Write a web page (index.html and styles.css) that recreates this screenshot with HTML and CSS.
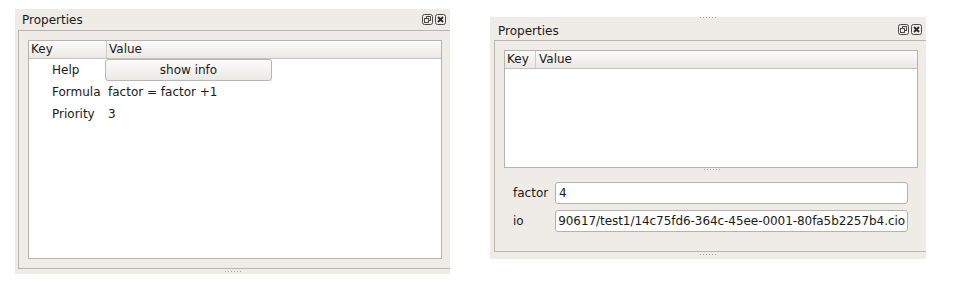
FILE: index.html
```html
<!DOCTYPE html>
<html>
<head>
  <meta charset="utf-8">
  <link rel="stylesheet" href="styles.css">
</head>
<body>
  <div class="dock dock-left">
    <div class="dock-title">
      <span>Properties</span>
      <div class="dock-buttons">
        <svg width="11" height="11" viewBox="0 0 11 11"><rect x="0.5" y="0.5" width="10" height="10" rx="2" fill="none" stroke="#4a4a4a"/><rect x="4.5" y="2.5" width="4" height="4" fill="none" stroke="#4a4a4a"/><rect x="2.5" y="4.5" width="4" height="4" fill="#efebe7" stroke="#4a4a4a"/></svg>
        <svg width="11" height="11" viewBox="0 0 11 11"><rect x="0.5" y="0.5" width="10" height="10" rx="2" fill="none" stroke="#4a4a4a"/><path d="M3 3L8 8M8 3L3 8" stroke="#2a2a2a" stroke-width="1.8"/></svg>
      </div>
    </div>
    <div class="dock-frame">
      <div class="tree tree-left">
        <div class="tree-head">
          <div class="col-key">Key</div>
          <div class="col-val">Value</div>
        </div>
        <div class="tree-row">
          <div class="col-key">Help</div>
          <div class="col-val"><button class="info-btn">show info</button></div>
        </div>
        <div class="tree-row">
          <div class="col-key">Formula</div>
          <div class="col-val">factor = factor +1</div>
        </div>
        <div class="tree-row">
          <div class="col-key">Priority</div>
          <div class="col-val">3</div>
        </div>
      </div>
    </div>
    <div class="grip grip-bottom"></div>
  </div>

  <div class="dock dock-right">
    <div class="grip grip-top"></div>
    <div class="dock-title">
      <span>Properties</span>
      <div class="dock-buttons">
        <svg width="11" height="11" viewBox="0 0 11 11"><rect x="0.5" y="0.5" width="10" height="10" rx="2" fill="none" stroke="#4a4a4a"/><rect x="4.5" y="2.5" width="4" height="4" fill="none" stroke="#4a4a4a"/><rect x="2.5" y="4.5" width="4" height="4" fill="#efebe7" stroke="#4a4a4a"/></svg>
        <svg width="11" height="11" viewBox="0 0 11 11"><rect x="0.5" y="0.5" width="10" height="10" rx="2" fill="none" stroke="#4a4a4a"/><path d="M3 3L8 8M8 3L3 8" stroke="#2a2a2a" stroke-width="1.8"/></svg>
      </div>
    </div>
    <div class="dock-frame frame-right">
      <div class="tree tree-right">
        <div class="tree-head">
          <div class="col-key">Key</div>
          <div class="col-val">Value</div>
        </div>
      </div>
      <div class="splitter"><div class="grip"></div></div>
      <div class="form">
        <div class="form-row">
          <label>factor</label>
          <div class="field">4</div>
        </div>
        <div class="form-row">
          <label>io</label>
          <div class="field field-end"><span>90617/test1/14c75fd6-364c-45ee-0001-80fa5b2257b4.cio</span></div>
        </div>
      </div>
    </div>
    <div class="grip grip-bottom"></div>
  </div>
</body>
</html>
```

FILE: styles.css
```css
body { margin: 0; background: #fff; font-family: "DejaVu Sans", sans-serif; font-size: 12px; color: #1a1a1a; display: flex; align-items: flex-start; padding-left: 15px; gap: 40px; }

.dock { background: #efebe7; overflow: hidden; display: flex; flex-direction: column; }
.dock-left { width: 435px; height: 265px; margin-top: 9px; }
.dock-right { width: 436px; height: 242px; margin-top: 17px; }

.dock-title { display: flex; align-items: center; justify-content: space-between; padding: 0 4px 0 7px; }
.dock-left .dock-title { height: 21px; padding-top: 1px; box-sizing: border-box; }
.dock-right .dock-title { height: 19px; padding-left: 8px; }
.dock-buttons { display: flex; gap: 2px; margin-bottom: 2px; }
.dock-buttons svg { display: block; }

.dock-frame { border: 1px solid #bab5af; padding: 9px; width: 414px; margin-left: 3px; box-sizing: content-box; }
.dock-left .dock-frame { height: 219px; }
.frame-right { margin-left: 4px; height: 201px; padding-bottom: 0; }

.tree { background: #fff; border: 1px solid #b7b2ac; box-sizing: border-box; width: 414px; }
.tree-left { height: 219px; }
.tree-right { height: 118px; }

.tree-head { display: flex; height: 18px; background: linear-gradient(#fbfbfa, #ebe8e4); border-bottom: 1px solid #c4c0ba; line-height: 17px; box-sizing: border-box; }
.tree-head .col-key { border-right: 1px solid #cfcbc6; padding-left: 2px; }
.tree-left .col-key { width: 75px; }
.tree-left .tree-head .col-val { padding-left: 2px; }
.tree-right .col-key { width: 28px; }
.tree-right .tree-head .col-val { padding-left: 3px; }

.tree-row { display: flex; height: 22px; align-items: center; }
.tree-row .col-key { padding-left: 23px; width: 53px; }
.tree-row .col-val { padding-left: 3px; flex: 1; }
.info-btn { display: block; width: 167px; height: 22px; margin: 0 0 0 -3px; border: 1px solid #b9b5b0; border-radius: 3px; background: linear-gradient(#fbfbfb, #ebe9e6); font: inherit; color: inherit; padding: 0; }

.grip { height: 1px; width: 16px; margin: 0 auto; background: repeating-linear-gradient(90deg, #aaa59f 0 1px, transparent 1px 3px); }
.grip-bottom { margin-top: 2px; }
.grip-top { margin-top: 0; margin-bottom: 3px; }
.splitter { height: 13px; }
.splitter .grip { margin-top: 1px; margin-left: 200px; }

.form { display: flex; flex-direction: column; gap: 6px; padding-left: 9px; }
.form-row { display: flex; align-items: center; }
.form-row label { width: 42px; }
.field { width: 353px; height: 22px; box-sizing: border-box; background: #fff; border: 1px solid #b5b1ab; border-radius: 3px; padding: 0 3px; line-height: 20px; overflow: hidden; white-space: nowrap; }
.field-end { display: flex; justify-content: flex-end; padding: 0 2px 0 1px; letter-spacing: -0.06px; }
.field-end span { flex-shrink: 0; }
```
